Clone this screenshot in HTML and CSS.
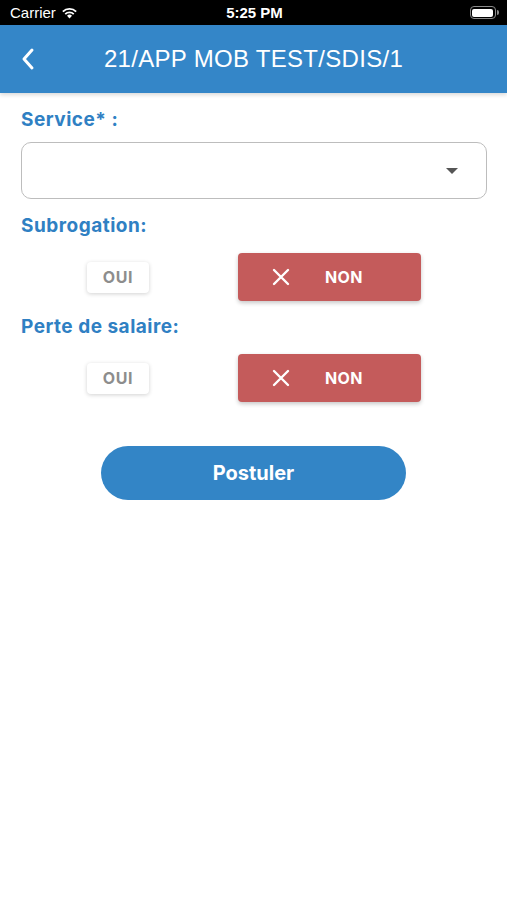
FILE: index.html
```html
<!DOCTYPE html>
<html lang="fr">
<head>
    <meta charset="UTF-8">
    <meta name="viewport" content="width=device-width, initial-scale=1.0">
    <title>21/APP MOB TEST/SDIS/1</title>
    <link rel="stylesheet" href="styles.css">
</head>
<body>

<div class="statusBar">
    <div class="carrier">
        Carrier
        <svg width="17" height="12" viewBox="0 0 17 12">
            <path d="M8.5 11.5 L6 8.8 A3.6 3.6 0 0 1 11 8.8 Z" fill="#fff"/>
            <path d="M3.6 6.4 A7 7 0 0 1 13.4 6.4 L12.1 7.7 A5.2 5.2 0 0 0 4.9 7.7 Z" fill="#fff"/>
            <path d="M1.2 4 A10.4 10.4 0 0 1 15.8 4 L14.5 5.3 A8.6 8.6 0 0 0 2.5 5.3 Z" fill="#fff"/>
        </svg>
    </div>
    <div class="clock">5:25 PM</div>
    <div class="battery">
        <span class="batteryBody"><span class="batteryLevel"></span></span>
        <span class="batteryTip"></span>
    </div>
</div>

<header class="navBar">
    <svg class="backIcon" width="14" height="24" viewBox="0 0 14 24">
        <path d="M11 3 L3 12 L11 21" fill="none" stroke="#fff" stroke-width="3" stroke-linecap="round" stroke-linejoin="round"/>
    </svg>
    <h1 class="navTitle">21/APP MOB TEST/SDIS/1</h1>
</header>

<main class="form">
    <div class="fieldLabel">Service* :</div>
    <div class="select">
        <span class="caret"></span>
    </div>

    <div class="fieldLabel spaced">Subrogation:</div>
    <div class="choiceRow">
        <button class="btnOui">OUI</button>
        <button class="btnNon">
            <svg width="18" height="18" viewBox="0 0 18 18">
                <path d="M2 2 L16 16 M16 2 L2 16" stroke="#fff" stroke-width="2.4" stroke-linecap="round"/>
            </svg>
            <span>NON</span>
        </button>
    </div>

    <div class="fieldLabel spaced">Perte de salaire:</div>
    <div class="choiceRow">
        <button class="btnOui">OUI</button>
        <button class="btnNon">
            <svg width="18" height="18" viewBox="0 0 18 18">
                <path d="M2 2 L16 16 M16 2 L2 16" stroke="#fff" stroke-width="2.4" stroke-linecap="round"/>
            </svg>
            <span>NON</span>
        </button>
    </div>

    <div class="submitWrap">
        <button class="btnSubmit">Postuler</button>
    </div>
</main>

</body>
</html>
```

FILE: styles.css
```css
* {
  box-sizing: border-box;
}

body, html {
  margin: 0;
  padding: 0;
  background: #fff;
  font-family: 'Liberation Sans', Arial, sans-serif;
}

.statusBar {
  height: 25px;
  background: #000;
  color: #fff;
  display: flex;
  align-items: center;
  justify-content: space-between;
  padding: 0 8px 0 10px;
  font-size: 15px;
}

.carrier {
  display: flex;
  align-items: center;
  gap: 5px;
  width: 120px;
}

.clock {
  font-weight: 600;
}

.battery {
  width: 120px;
  display: flex;
  justify-content: flex-end;
  align-items: center;
}

.batteryBody {
  width: 26px;
  height: 13px;
  border: 1.5px solid #8a8a8a;
  border-radius: 4px;
  padding: 1.5px;
  display: flex;
}

.batteryLevel {
  flex: 1;
  background: #fff;
  border-radius: 2px;
}

.batteryTip {
  width: 2px;
  height: 5px;
  background: #8a8a8a;
  border-radius: 0 2px 2px 0;
  margin-left: 1px;
}

.navBar {
  height: 68px;
  background: #3486c8;
  display: flex;
  align-items: center;
  position: relative;
  box-shadow: 0 2px 4px rgba(0, 0, 0, 0.15);
}

.backIcon {
  position: absolute;
  left: 21px;
  top: 22px;
}

.navTitle {
  flex: 1;
  margin: 0;
  text-align: center;
  color: #fff;
  font-size: 24px;
  font-weight: normal;
  letter-spacing: 0.3px;
}

.form {
  padding: 15px 20px 0 21px;
  font-family: 'Inter', 'Liberation Sans', sans-serif;
}

.fieldLabel {
  color: #2f80c3;
  font-size: 19px;
  font-weight: bold;
  line-height: 24px;
  letter-spacing: 0.5px;
}

.fieldLabel.spaced {
  margin-top: 15px;
}

.select {
  margin-top: 10px;
  height: 57px;
  border: 1.5px solid #bdbdbd;
  border-radius: 10px;
  display: flex;
  align-items: center;
  justify-content: flex-end;
  padding-right: 28px;
}

.caret {
  width: 0;
  height: 0;
  border-left: 6px solid transparent;
  border-right: 6px solid transparent;
  border-top: 6px solid #555;
}

.choiceRow {
  margin-top: 15px;
  height: 48px;
  display: flex;
  align-items: center;
  padding-left: 66px;
  gap: 89px;
}

button {
  font-family: inherit;
  border: none;
  cursor: pointer;
}

.btnOui {
  width: 62px;
  height: 31px;
  background: #fff;
  color: #8d8d8d;
  font-size: 16px;
  font-weight: bold;
  letter-spacing: 0.6px;
  border-radius: 4px;
  box-shadow: 0 1px 4px rgba(0, 0, 0, 0.18);
}

.btnNon {
  width: 183px;
  height: 48px;
  background: #c45b5b;
  color: #fff;
  font-size: 16px;
  font-weight: bold;
  letter-spacing: 0.4px;
  border-radius: 4px;
  box-shadow: 0 2px 4px rgba(0, 0, 0, 0.22);
  display: flex;
  align-items: center;
  padding-left: 34px;
  gap: 35px;
}

.choiceRow + .fieldLabel {
  margin-top: 14px;
}

.submitWrap {
  margin-top: 44px;
  display: flex;
  justify-content: center;
  padding-right: 1px;
}

.btnSubmit {
  width: 305px;
  height: 54px;
  border-radius: 27px;
  background: #3385c6;
  color: #fff;
  font-size: 20px;
  font-weight: bold;
}
```
